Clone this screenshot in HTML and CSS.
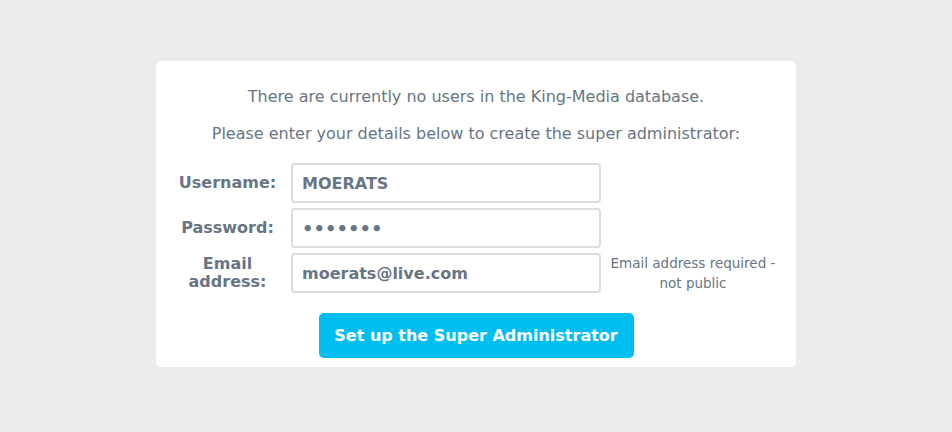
FILE: index.html
```html
<!DOCTYPE html>
<html>
<head>
<meta charset="utf-8">
<link rel="stylesheet" href="styles.css">
</head>
<body>
<div class="card">
  <p class="intro">There are currently no users in the King-Media database.</p>
  <p class="intro second">Please enter your details below to create the super administrator:</p>
  <form class="form">
    <label class="label" for="u">Username:</label>
    <input class="field" id="u" type="text" value="MOERATS">
    <span></span>
    <label class="label" for="p">Password:</label>
    <input class="field pw" id="p" type="password" value="1234567">
    <span></span>
    <label class="label" for="e">Email<br>address:</label>
    <input class="field" id="e" type="text" value="moerats@live.com">
    <span class="hint">Email address required - not public</span>
  </form>
  <div class="actions">
    <button class="btn" type="button">Set up the Super Administrator</button>
  </div>
</div>
</body>
</html>
```
FILE: styles.css
```css
html, body {
  margin: 0;
  background: #ececec;
}
body {
  padding-top: 61px;
  font-family: "DejaVu Sans", Verdana, sans-serif;
  color: #677584;
}
.card {
  width: 640px;
  height: 306px;
  margin: 0 auto;
  background: #fff;
  border-radius: 5px;
  box-sizing: border-box;
  padding-top: 26px;
}
.intro {
  margin: 0;
  text-align: center;
  font-size: 16px;
  line-height: 20px;
}
.second {
  margin-top: 17px;
}
.form {
  margin-top: 19px;
  display: grid;
  grid-template-columns: 135px 310px 175px;
  row-gap: 5px;
  align-items: center;
}
.label {
  text-align: center;
  font-weight: bold;
  font-size: 16px;
  line-height: 18px;
  padding-left: 8px;
}
.field {
  width: 310px;
  height: 40px;
  box-sizing: border-box;
  border: 2px solid #dcdcdc;
  border-radius: 4px;
  padding: 0 9px;
  font-family: inherit;
  font-size: 16px;
  font-weight: bold;
  color: #677584;
  background: #fff;
  outline: none;
}
.pw {
  font-size: 18px;
}
.hint {
  text-align: center;
  font-size: 13.5px;
  line-height: 20px;
  padding-left: 9px;
}
.actions {
  display: flex;
  justify-content: center;
  margin-top: 20px;
}
.btn {
  width: 315px;
  height: 45px;
  border: none;
  border-radius: 5px;
  background: #00bef0;
  color: #fff;
  font-family: inherit;
  font-weight: bold;
  font-size: 16px;
}
```
